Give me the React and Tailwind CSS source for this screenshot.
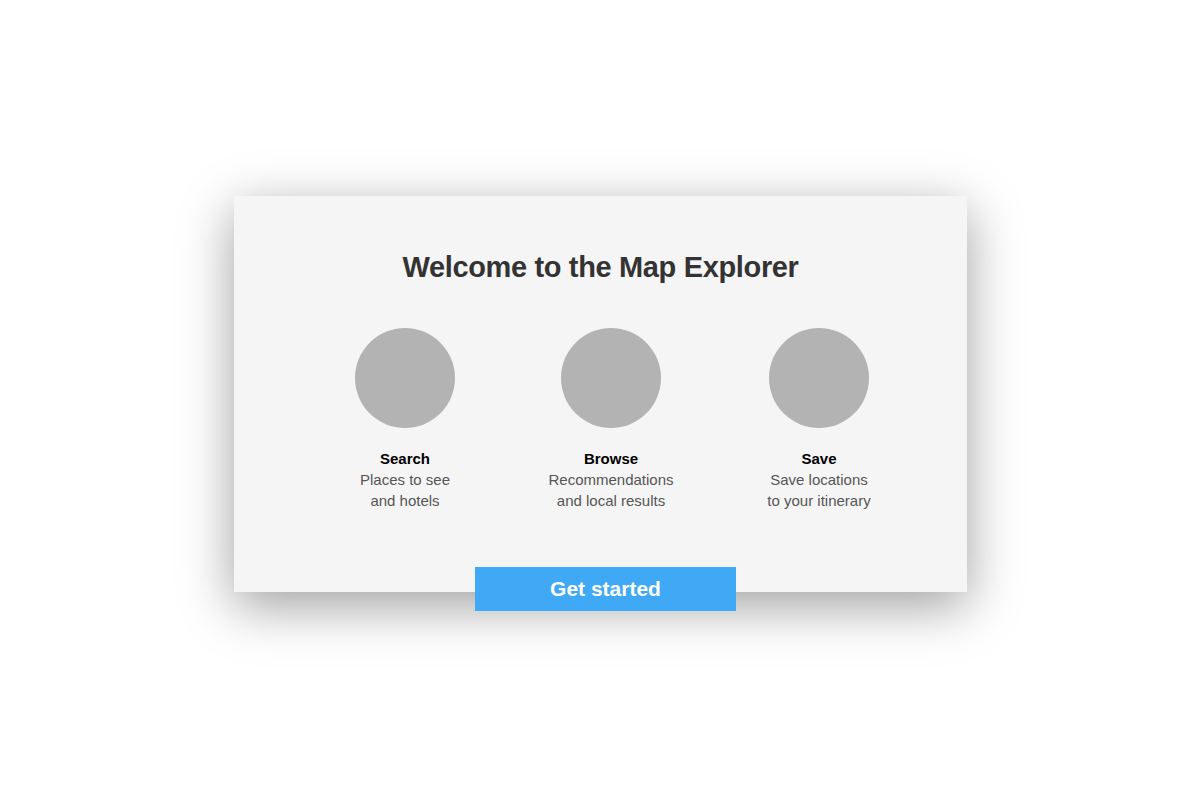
import React from 'react';

const features = [
  { title: 'Search', lines: ['Places to see', 'and hotels'], width: 'w-[100px]' },
  { title: 'Browse', lines: ['Recommendations', 'and local results'], width: 'w-[128px]' },
  { title: 'Save', lines: ['Save locations', 'to your itinerary'], width: 'w-[104px]' },
];

function Feature({ item }) {
  return (
    <div className={`${item.width} flex flex-col items-center`}>
      <div className="w-[100px] h-[100px] rounded-full bg-[#b3b3b3] shrink-0" />
      <div className="mt-[20px] text-center text-[15px] leading-[21px] whitespace-nowrap">
        <div className="font-bold text-black">{item.title}</div>
        {item.lines.map(l => <div key={l} className="text-[#555]">{l}</div>)}
      </div>
    </div>
  );
}

export default function App() {
  return (
    <div className="w-[1200px] h-[800px] bg-white pt-[196px] pl-[234px]" style={{ fontFamily: '"Liberation Sans", Arial, sans-serif' }}>
      <div className="w-[733px] bg-[#f5f5f5] flex flex-col shadow-[0_14px_50px_rgba(0,0,0,0.38)]">
        <h1 className="mt-[54px] text-center text-[29px] leading-[34px] font-bold text-[#333] tracking-[-0.35px]">
          Welcome to the Map Explorer
        </h1>
        <div className="mt-[44px] flex pl-[121px] gap-[92px]">
          {features.map(f => <Feature key={f.title} item={f} />)}
        </div>
        <button className="mt-[56px] -mb-[19px] ml-[241px] w-[261px] h-[44px] bg-[#3fa9f5] text-white text-[21px] font-bold relative">
          Get started
        </button>
      </div>
    </div>
  );
}
